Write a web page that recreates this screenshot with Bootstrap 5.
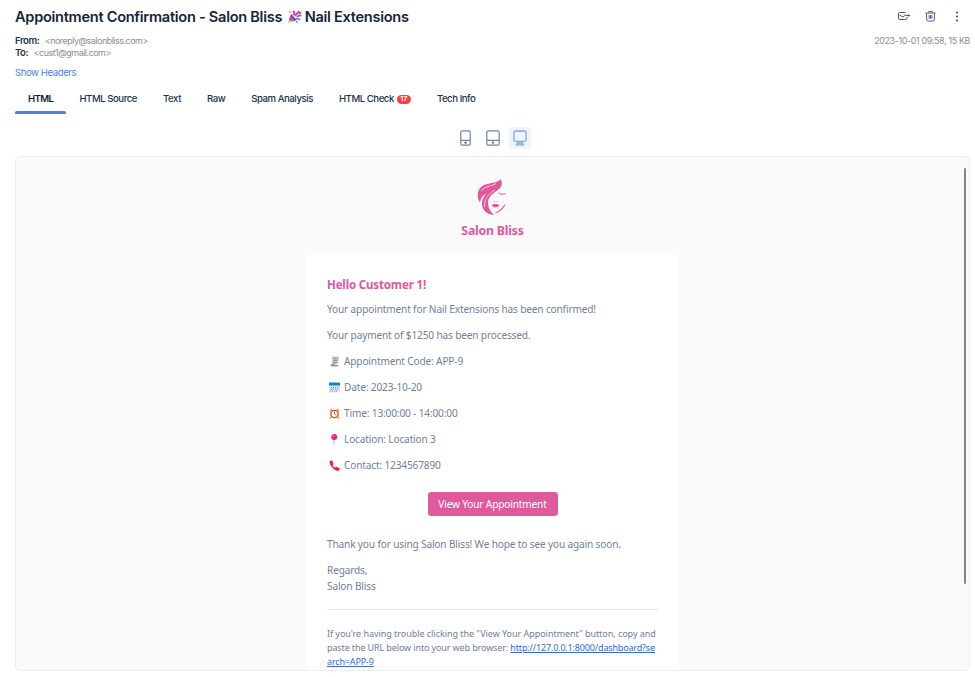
<!DOCTYPE html>
<html lang="en">
<head>
<meta charset="utf-8">
<meta name="viewport" content="width=device-width, initial-scale=1">
<title>Appointment Confirmation - Salon Bliss</title>
<link href="https://cdn.jsdelivr.net/npm/bootstrap@5.3.0/dist/css/bootstrap.min.css" rel="stylesheet">
<style>
  body { font-family: Inter, sans-serif; font-size: 9.6px; color: #1c3248; height: 677px; overflow: hidden; }
  svg { display: block; flex: none; }
  main { margin-left: 15px; width: 955px; }
  .subject { font-size: 14.6px; letter-spacing: -.29px; line-height: 20px; font-weight: 600; color: #15263a; padding-top: 7px; height: 34px; }
  .subject svg { margin: 3px 2.500px 0 5px; }
  .tools { padding-top: 10px; gap: 14px; padding-right: 11px; }
  .tools .bin { margin-right: 5px; }
  .addresses { font-size: 8.9px; letter-spacing: -.46px; line-height: 12.4px; height: 26px; padding-top: .6px; }
  .label { font-weight: 600; font-size: 9.6px; margin-right: 5.500px; }
  .grey { color: #8c8e87; }
  .stamp { letter-spacing: -.34px; }
  .headers-link { color: #4a7fee; letter-spacing: -.43px; line-height: 14px; margin-top: 6px; height: 19px; }
  .mail-tabs { height: 29px; --bs-nav-link-padding-x: 13px; --bs-nav-link-padding-y: 0; }
  .mail-tabs .nav-link { font-size: 9.6px; letter-spacing: -.45px; line-height: 27px; height: 29px; color: #1c3248; font-weight: 500; white-space: nowrap; position: relative; }
  .mail-tabs .nav-link.active { color: #0e1c2e; font-weight: 600; letter-spacing: -.6px; }
  .mail-tabs .nav-link.active::after { content: ""; position: absolute; left: 0; right: 0; bottom: 0; height: 3px; background: #4a7fee; border-radius: 2px 2px 0 0; }
  .count { display: inline-block; vertical-align: 1px; font-size: 6.5px; letter-spacing: 0; line-height: 8.500px; width: 14px; height: 8.5px; background: #f8423f; margin-left: 3px; }
  .devices { height: 42px; gap: 5.500px; padding-top: 13px; }
  .device { width: 22px; height: 22px; border-radius: 2px; color: #74859a; }
  .device.on { background: #eff5f7; color: #7da4f5; }
  .preview { height: 515px; background: #fafafa; border: 1px solid #eeeeef; border-radius: 5px; overflow: hidden; position: relative; font-family: "Noto Sans", sans-serif; font-size: 10.1px; letter-spacing: -.15px; line-height: 15.75px; color: #718096; }
  .thumb { position: absolute; right: 3px; top: 11px; width: 2px; height: 416px; background: #858585; border-radius: 1px; }
  .logo { margin-top: 22px; }
  .brand { color: #e0579c; font-weight: 700; font-size: 12.2px; line-height: 18px; margin-top: 6px; }
  .letter { width: 372px; height: 440px; margin: 14.500px auto 0; padding: 21px 20.500px; background: #fff; }
  .letter p { margin: 0 0 10.3px; white-space: nowrap; }
  .greeting { color: #e0579c; font-weight: 700; font-size: 11.5px; line-height: 18px; margin-bottom: 8px; }
  .pic { width: 11px; height: 11px; margin: 0 4px 0 2px; }
  .btn-row { margin: 18.500px 0 20.800px; }
  .view-btn { --bs-btn-bg: #df5a9c; --bs-btn-color: #fff; --bs-btn-border-color: #df5a9c; --bs-btn-padding-y: 0; --bs-btn-padding-x: 0; --bs-btn-font-size: 10.1px; --bs-btn-border-radius: 3px; --bs-btn-hover-bg: #cf4a8c; --bs-btn-hover-color: #fff; width: 130px; height: 24px; line-height: 22px; }
  .rule { border-top: 1px solid #e8e8f3; margin: 15px 0 17px; }
  .fine { font-size: 9px; letter-spacing: -.04px; line-height: 13.8px; }
  .fine .tight { letter-spacing: -.12px; }
  .fine a { color: #3869d4; letter-spacing: -.16px; }
</style>
<script src="https://cdn.jsdelivr.net/npm/bootstrap@5.3.0/dist/js/bootstrap.bundle.min.js" defer></script>
</head>
<body class="bg-white">
<main class="d-flex flex-column">
    <header>
      <div class="d-flex justify-content-between">
        <h1 class="subject mb-0 d-flex align-items-start"><span>Appointment Confirmation - Salon Bliss</span>
          <svg width="15" height="14" viewBox="0 0 15 14"><path d="M1 13 4 4l6 6z" fill="#f6b52e"/><path d="M2 10l2-6 6 6-3 1z" fill="#684bd0"/><path d="M3 7l4 4" stroke="#f14c9b" stroke-width="1.5"/><path d="M6 5C8 4 8 2 6 1M10 7c1-2 3-1 4-2" stroke="#eb278d" stroke-width="1.8" fill="none"/><path d="M8 6l4-5M9 9c2-1 3 0 4 1" stroke="#2f9fe0" stroke-width="1.8" fill="none"/><path d="M8 5l5-3" stroke="#eb278d" stroke-width="1.200"/><circle cx="13" cy="3" r="1.200" fill="#ec3f9b"/><circle cx="10" cy="12" r=".9" fill="#35a3e2"/><circle cx="3" cy="2" r="1" fill="#f6b52e"/></svg>
          <span>Nail Extensions</span></h1>
        <div class="tools d-flex">
          <svg width="14" height="12" viewBox="0 0 14 12" fill="none" stroke="#40556f" stroke-width="1"><path d="M8.500 2.500H2.700Q1.500 2.500 1.500 3.700v4.600Q1.500 9.500 2.700 9.500h6.100Q10 9.500 10 8.300V7M2.500 5l3.300 2L9 4.500"/><path d="M9 5.500h3"/><path d="M11.300 4 13.300 5.500l-2 1.500z" fill="#40556f" stroke="none"/></svg>
          <svg class="bin" width="11" height="12" viewBox="0 0 12 12" fill="none" stroke="#40556f"><path d="M.5 2.800h11M4 2.500V1.200h4v1.300M1.500 3l.4 7.200q.1 1.300 1.300 1.300h5.600q1.200 0 1.300-1.300L10.500 3M4.500 5v4M6 5v4M7.500 5v4"/></svg>
          <svg width="4" height="12" viewBox="0 0 4 12" fill="#2f4560"><circle cx="2" cy="2.500" r="1"/><circle cx="2" cy="6.500" r="1"/><circle cx="2" cy="10.500" r="1"/></svg>
        </div>
      </div>
      <div class="addresses d-flex justify-content-between">
        <div><div><span class="label">From:</span><span class="grey">&lt;noreply@salonbliss.com&gt;</span></div>
        <div><span class="label">To:</span><span class="grey">&lt;cust1@gmail.com&gt;</span></div></div>
        <span class="grey stamp">2023-10-01 09:58, 15 KB</span>
      </div>
      <div class="headers-link">Show Headers</div>
      <ul class="nav mail-tabs flex-nowrap">
        <li class="nav-item"><a class="nav-link active" href="#">HTML</a></li>
        <li class="nav-item"><a class="nav-link" href="#">HTML Source</a></li>
        <li class="nav-item"><a class="nav-link" href="#">Text</a></li>
        <li class="nav-item"><a class="nav-link" href="#">Raw</a></li>
        <li class="nav-item"><a class="nav-link" href="#">Spam Analysis</a></li>
        <li class="nav-item"><a class="nav-link" href="#">HTML Check<b class="count rounded-pill text-white text-center">17</b></a></li>
        <li class="nav-item"><a class="nav-link" href="#">Tech Info</a></li>
      </ul>
    </header>
    <div class="devices d-flex justify-content-center">
      <div class="device d-flex justify-content-center align-items-center"><svg width="11" height="16" viewBox="0 0 11 16" fill="none" stroke="currentColor" stroke-width="1.200"><rect x=".8" y=".8" width="9.400" height="14.400" rx="1.500"/><path d="M1 10.300h9M5.500 11.300v3M4.200 12.700h2.600"/></svg></div>
      <div class="device d-flex justify-content-center align-items-center"><svg width="14" height="16" viewBox="0 0 14 16" fill="none" stroke="currentColor" stroke-width="1.200"><rect x=".8" y=".8" width="12.400" height="14.400" rx="1.500"/><path d="M1 10.300h12M7 11.300v3M5.700 12.700h2.600"/></svg></div>
      <div class="device on d-flex justify-content-center align-items-center"><svg width="14" height="16" viewBox="0 0 14 16" fill="none" stroke="currentColor" stroke-width="1.300"><rect x="1" y="1" width="12" height="10.300" rx="1.500"/><path d="M5.500 11.300v2M8.500 11.300v2M3.500 14.800q.3-1.700 1.500-1.700h4q1.200 0 1.500 1.700z"/></svg></div>
    </div>
    <section class="preview">
      <div class="thumb"></div>
      <div class="d-flex flex-column align-items-center">
        <svg class="logo" width="31" height="37" viewBox="0 0 31 37"><path d="M23.500 0C25.500 3 25.500 7 21.500 10.500 17 14 11.500 17 11 23c-.3 5 2 9 6 13C9 35.500 4.500 30 5 24c.2-4 2-7 5-10C6 16 3.500 19 3 23.500 1 20.500.2 17 1 13.500 3 5.500 10 5 16 3.800c3.500-.8 6-1.500 7.500-3.800z" fill="#e0579c"/><path d="M4 12c4-5 10-4.500 15-7.500M7.500 28C7 20 11 16 17.500 11" fill="none" stroke="#fafafa" stroke-width=".7"/><path d="M28 25.500c-1.500 4-4.500 7-9.500 8.500 4.500-2 7-5 9.500-8.500z" fill="#e0579c" stroke="#e0579c" stroke-width=".7"/><path d="M21.500 14q3 2.300 7 .7" fill="none" stroke="#e0579c" stroke-width="1"/><path d="M14.500 26.500q3-2 4-1.200 1-.8 4 1.200-4 4-8 0z" fill="#e0579c"/><path d="M17 22.300l1 .4M20.500 22.300l-1 .4" stroke="#e0579c" stroke-width=".8"/></svg>
        <div class="brand">Salon Bliss</div>
      </div>
      <article class="letter">
        <div class="greeting">Hello Customer 1!</div>
        <p>Your appointment for Nail Extensions has been confirmed!</p>
        <p>Your payment of $1250 has been processed.</p>
        <p class="d-flex align-items-center"><svg class="pic" viewBox="0 0 11 11"><path d="M3 .5h7L9 8H3z" fill="#c7c7c7"/><path d="M4.500 2.500h4M4.500 4.500h4M4 6.500h4" stroke="#888" stroke-width=".8"/><path d="M1.500 8h5v1h3v1.500H3Q1.500 10.500 1.500 8z" fill="#999"/></svg><span>Appointment Code: APP-9</span></p>
        <p class="d-flex align-items-center"><svg class="pic" viewBox="0 0 11 11"><rect y="1" width="11" height="9.500" rx="1" fill="#dde5f4"/><path d="M0 .5h11v3H0z" fill="#1682c9"/><path d="M2 5.500h8M2 7.200h8M1 9h7" stroke="#7d91b5" stroke-dasharray="1 1"/></svg><span>Date: 2023-10-20</span></p>
        <p class="d-flex align-items-center"><svg class="pic" viewBox="0 0 11 11"><path d="M1 3 3 1M8 1l2 2M2 9l-1 1.500M9 9l1 1.500" stroke="#f6a623" stroke-width="1.800"/><circle cx="5.500" cy="6" r="3.700" fill="#fff" stroke="#ed3b35" stroke-width="1.300"/><path d="M5.500 3.500V6l2 .7" fill="none" stroke="#666" stroke-width=".8"/></svg><span>Time: 13:00:00 - 14:00:00</span></p>
        <p class="d-flex align-items-center"><svg class="pic" viewBox="0 0 11 11"><path d="M5 5v5.500" stroke="#b2b9c5"/><circle cx="5.200" cy="3" r="2.900" fill="#f0178c"/><circle cx="4.500" cy="2" r=".8" fill="#fbb"/></svg><span>Location: Location 3</span></p>
        <p class="d-flex align-items-center"><svg class="pic" viewBox="0 0 11 11"><path d="M.8 1 3 .3 4.700 4 3.500 5.200q1 1.700 2.500 2.600L7 6.600 11 8.500 10 10.600Q8 11.700 4.500 8.700 -.3 4.500.8 1z" fill="#ec2638"/></svg><span>Contact: 1234567890</span></p>
        <div class="text-center btn-row"><a class="btn view-btn" href="#">View Your Appointment</a></div>
        <p>Thank you for using Salon Bliss! We hope to see you again soon.</p>
        <p>Regards,<br>Salon Bliss</p>
        <div class="rule"></div>
        <p class="fine">If you're having trouble clicking the "View Your Appointment" button, copy and<br><span class="tight">paste the URL below into your web browser: </span><a href="#">http://127.0.0.1:8000/dashboard?se<br>arch=APP-9</a></p>
      </article>
    </section>
</main>
</body>
</html>
